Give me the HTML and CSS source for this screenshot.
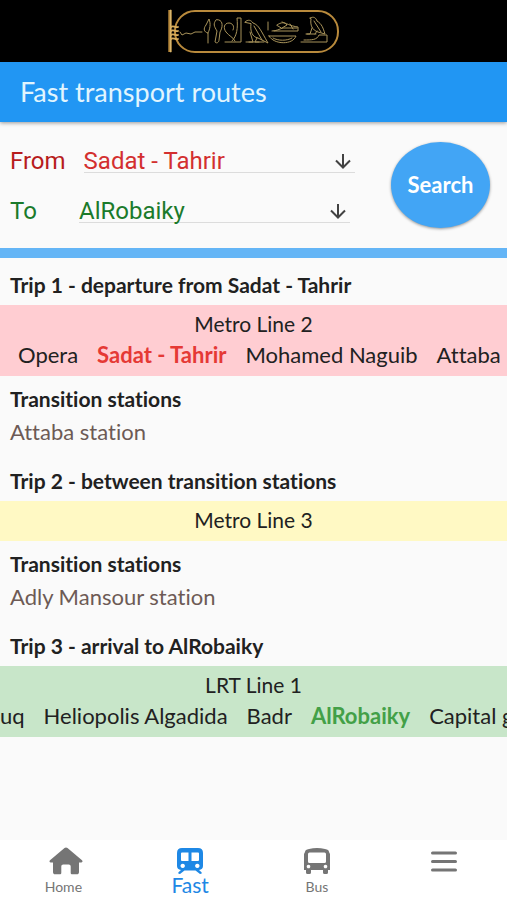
FILE: index.html
```html
<!DOCTYPE html>
<html lang="en">
<head>
  <meta charset="UTF-8">
  <meta name="viewport" content="width=device-width, initial-scale=1">
  <title>Fast transport routes</title>
  <link rel="stylesheet" href="styles.css">
</head>
<body>
  <!-- Cartouche logo -->
  <div class="banner">
    <svg class="logo" viewBox="0 0 174 46" fill="none" stroke="#a8935a" stroke-linecap="round" stroke-linejoin="round">
      <rect x="8" y="3" width="163" height="41" rx="20" stroke="#b98a3c" stroke-width="2"/>
      <path d="M3 2v42" stroke="#b98a3c" stroke-width="3.4" stroke-linecap="butt"/>
      <path d="M3.7 2v42" stroke="#e8cf8e" stroke-width=".8"/>
      <path d="M4 19c2-2 4 1 7 0M4 23c2-2 4 1 7 0M4 27c2-2 4 1 7 0M4 31c2-2 4 1 7 0" stroke="#d6ac5c" stroke-width="1.8"/>
      <g stroke-width="1">
        <path d="M13 24l2 3 4-2 5 1 4-2h7"/>
        <path d="M41 35V25c-4-1-5-4-2-8l3-6c2 5 1 10-1 14"/>
        <path d="M49 12c-3 4-2 6 1 11l-2 11c2 2 4 0 4-2l1-8c3-5 3-11-1-12z"/>
        <path d="M66 22c2-4-1-7-4-7-5 0-6 5-3 9 3 4 7 5 9 9"/>
        <path d="M58 34h16V10h-4c1 10 0 18-5 23"/>
        <path d="M78 14c3-3 6-2 8 1 6 2 8 8 15 20l-10-5c-6-1-8-7-7-14zM87 18l8 14M83 24l3 10h-4M90 30l-2 4h4M79 34h18"/>
        <path d="M101 14v8"/>
        <path d="M105 23c5 0 7-2 11-3h14M110 17c4-3 8-3 10 0l-5 3zM115 14c4 1 8 4 16 5v4h-24M123 16l3 5"/>
        <path d="M102 28h27c-3 9-22 9-27 0zM106 30c5 3 14 3 19 0"/>
        <path d="M143 10c4-2 6 0 7 3 5 3 6 7 8 13l-7-2c-6-2-8-7-7-13zM147 13l7 11M145 20l-2 6h-3M150 23l-2 3M139 26h10"/>
        <path d="M134 34h26v-7h-8c-2 5-7 5-15 5"/>
      </g>
    </svg>
  </div>

  <header class="app-bar">
    <h1>Fast transport routes</h1>
  </header>

  <!-- Route search -->
  <form class="search">
    <div class="fields">
      <div class="field from">
        <label for="from">From</label>
        <div class="picker">
          <select id="from">
            <option>Sadat - Tahrir</option>
          </select>
          <svg class="arrow" viewBox="0 0 18 18"><path d="M9 2v13M2 8.5l7 7 7-7"/></svg>
        </div>
      </div>
      <div class="field to">
        <label for="to">To</label>
        <div class="picker">
          <select id="to">
            <option>AlRobaiky</option>
          </select>
          <svg class="arrow" viewBox="0 0 18 18"><path d="M9 2v13M2 8.5l7 7 7-7"/></svg>
        </div>
      </div>
    </div>
    <button class="search-btn" type="submit">Search</button>
  </form>

  <!-- Trip results -->
  <main class="results">
    <section>
      <h2>Trip 1 - departure from Sadat - Tahrir</h2>
      <div class="line red">
        <h3>Metro Line 2</h3>
        <ul class="stations">
          <li>Opera</li>
          <li class="current">Sadat - Tahrir</li>
          <li>Mohamed Naguib</li>
          <li>Attaba</li>
        </ul>
      </div>
      <div class="transition">
        <h4>Transition stations</h4>
        <p>Attaba station</p>
      </div>
    </section>

    <section>
      <h2>Trip 2 - between transition stations</h2>
      <div class="line yellow">
        <h3>Metro Line 3</h3>
      </div>
      <div class="transition">
        <h4>Transition stations</h4>
        <p>Adly Mansour station</p>
      </div>
    </section>

    <section>
      <h2>Trip 3 - arrival to AlRobaiky</h2>
      <div class="line green">
        <h3>LRT Line 1</h3>
        <ul class="stations scrolled">
          <li>uq</li>
          <li>Heliopolis Algadida</li>
          <li>Badr</li>
          <li class="current">AlRobaiky</li>
          <li>Capital g</li>
        </ul>
      </div>
    </section>
  </main>

  <nav class="tab-bar">
    <a href="#home">
      <svg class="home-icon" viewBox="-5 0 39 28"><path d="M17 .5c.6 0 1 .2 1.500.6L33 13.200c1 1 .5 2.300-.8 2.300H30V25c0 1.500-.8 2.300-2.300 2.300h-4.400c-1 0-1.600-.6-1.600-1.600v-6.200c0-1.200-.8-2-2-2h-5.400c-1.200 0-2 .8-2 2v6.200c0 1-.6 1.600-1.600 1.600H6.300C4.800 27.300 4 26.500 4 25v-9.500H1.800C.5 15.500 0 14.200 1 13.200L15.500 1.100c.5-.4.900-.6 1.500-.6z"/></svg>
      <span>Home</span>
    </a>
    <a class="active" href="#fast">
      <svg viewBox="0 0 28 28"><path fill-rule="evenodd" d="M6 1h16q5 0 5 5v13q0 3.500-4 4l2.500 2.300q1 1.700-1.500 1.700l-4.500-3.500h-11L4 27q-2.500 0-1.500-1.700L5 23q-4-.5-4-4V6q0-5 5-5zM6 5.500q-1 0-1 1V13q0 1 1 1h6.500V5.500zM15.500 5.500V14H22q1 0 1-1V6.500q0-1-1-1zM6.700 16.700a2.200 2.200 0 1 0 .01 0zM21.300 16.700a2.200 2.200 0 1 0 .01 0z"/></svg>
      <span>Fast</span>
    </a>
    <a href="#bus">
      <svg viewBox="0 0 28 28"><path fill-rule="evenodd" d="M6 2q8-2 16 0 4 .7 4 3l1 2v16h-2v2.500q0 1.500-1.500 1.500h-2q-1.500 0-1.500-1.500V23H8v2.500Q8 27 6.500 27h-2Q3 27 3 25.500V23H1V7l1-2q0-2.300 4-3zM6.500 5.500Q5 5.500 5 7v7.500Q5 16 6.500 16h15q1.500 0 1.500-1.500V7q0-1.500-1.500-1.500zM5.500 17.700a1.800 1.800 0 1 0 .01 0zM22.500 17.700a1.800 1.800 0 1 0 .01 0z"/></svg>
      <span>Bus</span>
    </a>
    <a href="#menu" aria-label="Menu">
      <svg class="menu-icon" viewBox="0 0 28 28"><path d="M2.500 6h23M2.500 14.500h23M2.500 23h23"/></svg>
    </a>
  </nav>
</body>
</html>
```

FILE: styles.css
```css
* {
  box-sizing: border-box;
}
body {
  margin: 0;
  min-height: 100vh;
  display: flex;
  flex-direction: column;
  background-color: #fafafa;
  color: #212121;
  font-family: Lato, "Open Sans", sans-serif;
  font-size: 22px;
  font-variant-ligatures: none;
}
h1, h2, h3, h4, p, ul {
  margin: 0;
  padding: 0;
}

/* Top banner */
.banner {
  height: 62px;
  padding-top: 8px;
  background-color: #000;
  text-align: center;
}
.logo {
  width: 174px;
  height: 46px;
}
.app-bar {
  padding: 0 20px;
  background-color: #2196f3;
  box-shadow: 0 1px 4px rgba(0, 0, 0, 0.4);
}
.app-bar h1 {
  color: #e1f5fe;
  font-size: 27px;
  font-weight: normal;
  line-height: 60px;
}

/* Search form */
.search {
  display: flex;
  align-items: flex-start;
  justify-content: space-between;
  gap: 36px;
  padding: 20px 17px 18px 10px;
  border-bottom: 10px solid #64b5f6;
}
.fields {
  flex: 1;
  display: flex;
  flex-direction: column;
  gap: 12px;
  font-family: Roboto, sans-serif;
  font-size: 24px;
}
.field {
  display: flex;
  align-items: center;
  gap: 18px;
  line-height: 38px;
}
.from {
  color: #b71c1c;
}
.to {
  color: #1b7a2b;
}
.to label {
  min-width: 51px;
}
.picker {
  flex: 1;
  display: flex;
  align-items: center;
  padding-right: 3px;
  border-bottom: 1px solid #dcdcdc;
}
.to .picker {
  margin-right: 5px;
}
/* Descenders reach over the underline */
.picker select {
  flex: 1;
  min-width: 0;
  height: 28px;
  margin: -3px 0;
  padding: 0;
  border: none;
  outline: none;
  appearance: none;
  background: none;
  color: inherit;
  font: inherit;
  line-height: 28px;
}
.from select {
  color: #d32f2f;
}
.arrow {
  width: 18px;
  height: 18px;
  fill: none;
  stroke: #424242;
  stroke-width: 2;
}
.search-btn {
  width: 99px;
  height: 86px;
  padding: 0 0 2px;
  border: none;
  border-radius: 50%;
  background-color: #42a5f5;
  box-shadow: 0 1px 3px rgba(0, 0, 0, 0.4);
  color: #fff;
  font: bold 22px Lato, sans-serif;
  cursor: pointer;
}

/* Results */
.results {
  flex: 1;
  padding-top: 10px;
}
.results h2,
.results h4 {
  padding: 0 10px;
  font-size: 21px;
  font-weight: bold;
  line-height: 33px;
}
.results h2 {
  margin-bottom: 4px;
}
.line {
  padding: 4px 0 6px;
}
.line h3 {
  font-size: 21px;
  font-weight: normal;
  line-height: 30px;
  text-align: center;
}
.red {
  background-color: #ffcdd2;
}
.yellow {
  background-color: #fff9c4;
}
.green {
  background-color: #c8e6c9;
}
.stations {
  display: flex;
  gap: 19px;
  padding-left: 18px;
  overflow: hidden;
  list-style: none;
  line-height: 31px;
  white-space: nowrap;
}
.scrolled {
  padding-left: 0;
}
.current {
  font-weight: bold;
}
.red .current {
  color: #e53935;
}
.green .current {
  color: #43a047;
}
.transition {
  padding: 6px 0 16px;
}
.transition p {
  padding: 0 10px;
  color: #6d5a55;
  line-height: 33px;
}

/* Bottom navigation */
.tab-bar {
  display: flex;
  height: 60px;
  background-color: #fff;
}
.tab-bar a {
  flex: 1;
  display: flex;
  flex-direction: column;
  align-items: center;
  padding-top: 7px;
  color: #757575;
  font-size: 14px;
  line-height: 24px;
  text-decoration: none;
}
.tab-bar .active {
  color: #1e88e5;
  font-size: 21px;
  line-height: 20px;
}
.tab-bar svg {
  width: 28px;
  height: 28px;
  fill: currentColor;
}
.tab-bar .home-icon {
  width: 39px;
}
.tab-bar .menu-icon {
  stroke: currentColor;
  stroke-width: 3;
  stroke-linecap: round;
}
```
